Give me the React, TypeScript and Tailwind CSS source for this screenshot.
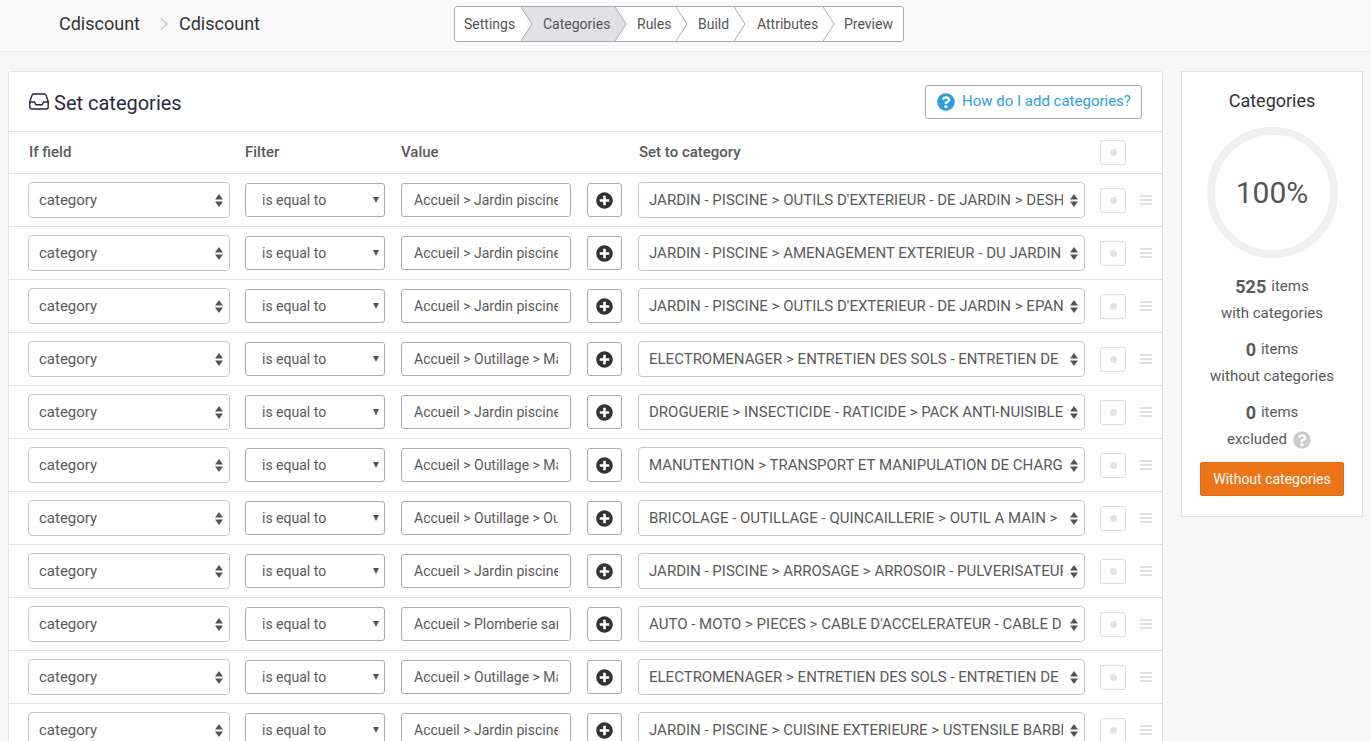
import { FaPlusCircle, FaQuestionCircle } from 'react-icons/fa';

interface Rule {
  value: string;
  category: string;
}

const steps = [
  { label: 'Settings', width: 'w-[66px]', pad: 'pl-[9px]' },
  { label: 'Categories', width: 'w-[94px]', pad: 'pl-[22px]', active: true },
  { label: 'Rules', width: 'w-[61px]', pad: 'pl-[22px]' },
  { label: 'Build', width: 'w-[58px]', pad: 'pl-[22px]' },
  { label: 'Attributes', width: 'w-[89px]', pad: 'pl-[23px]' },
  { label: 'Preview', width: 'w-[80px]', pad: 'pl-[21px]', last: true },
];

const rules: Rule[] = [
  { value: 'Accueil > Jardin piscine', category: "JARDIN - PISCINE > OUTILS D'EXTERIEUR - DE JARDIN > DESH" },
  { value: 'Accueil > Jardin piscine', category: 'JARDIN - PISCINE > AMENAGEMENT EXTERIEUR - DU JARDIN' },
  { value: 'Accueil > Jardin piscine', category: "JARDIN - PISCINE > OUTILS D'EXTERIEUR - DE JARDIN > EPAN" },
  { value: 'Accueil > Outillage > Ma', category: 'ELECTROMENAGER > ENTRETIEN DES SOLS - ENTRETIEN DE' },
  { value: 'Accueil > Jardin piscine', category: 'DROGUERIE > INSECTICIDE - RATICIDE > PACK ANTI-NUISIBLE' },
  { value: 'Accueil > Outillage > Ma', category: 'MANUTENTION > TRANSPORT ET MANIPULATION DE CHARG' },
  { value: 'Accueil > Outillage > Ou', category: 'BRICOLAGE - OUTILLAGE - QUINCAILLERIE > OUTIL A MAIN >' },
  { value: 'Accueil > Jardin piscine', category: 'JARDIN - PISCINE > ARROSAGE > ARROSOIR - PULVERISATEUR' },
  { value: 'Accueil > Plomberie san', category: "AUTO - MOTO > PIECES > CABLE D'ACCELERATEUR - CABLE D" },
  { value: 'Accueil > Outillage > Ma', category: 'ELECTROMENAGER > ENTRETIEN DES SOLS - ENTRETIEN DE' },
  { value: 'Accueil > Jardin piscine', category: 'JARDIN - PISCINE > CUISINE EXTERIEURE > USTENSILE BARBE' },
];

const UpDown = () => (
  <svg width="8" height="13" viewBox="0 0 8 13" className="shrink-0">
    <path d="M4 0 8 5.500H0zM4 13 0 7.500h8z" fill="#555" />
  </svg>
);

const DotButton = () => (
  <div className="w-[26px] h-[25px] shrink-0 flex items-center justify-center border border-[#dcdcdc] rounded-[3px] bg-white">
    <div className="w-[7px] h-[7px] rounded-full bg-[#e2e2e2]" />
  </div>
);

const InboxIcon = () => (
  <svg width="20" height="17" viewBox="0 0 20 17" fill="none" stroke="#24243f" strokeWidth="1.400" strokeLinejoin="round">
    <path d="M4.500 1h11a1.500 1.500 0 0 1 1.400 1L19.200 8.500V14a2 2 0 0 1-2 2H2.800a2 2 0 0 1-2-2V8.500L3.100 2a1.500 1.500 0 0 1 1.400-1z" />
    <path d="M1 9h4.500l1.500 2.800h6L14.500 9H19" />
  </svg>
);

const RuleRow = ({ rule }: { rule: Rule }) => (
  <div className="h-[53px] shrink-0 border-b border-[#e2e2e2] flex items-center pl-[19px] text-[14px] text-[#5a5a5a]">
    <div className="w-[202px] h-9 shrink-0 flex items-center justify-between border border-[#c9c9cd] rounded-[4px] pl-[10px] pr-[6px] text-[15px]">
      <span>category</span>
      <UpDown />
    </div>
    <div className="ml-[15px] w-[140px] h-[34px] shrink-0 flex items-center justify-between border border-[#a9a9b3] rounded-[3px] pl-4 pr-[5px]">
      <span>is equal to</span>
      <svg width="6" height="6" viewBox="0 0 6 6">
        <path d="M0 0h6L3 6z" fill="#555" />
      </svg>
    </div>
    <div className="ml-4 w-[170px] h-[34px] shrink-0 flex items-center border border-[#a9a9b3] rounded-[3px] pl-3 pr-3">
      <span className="block overflow-hidden whitespace-nowrap">{rule.value}</span>
    </div>
    <div className="ml-4 w-[35px] h-[34px] shrink-0 flex items-center justify-center border border-[#a9a9b3] rounded-[3px]">
      <FaPlusCircle className="w-[17px] h-[17px] text-[#333]" />
    </div>
    <div className="ml-4 w-[447px] h-9 shrink-0 flex items-center border border-[#c9c9cd] rounded-[4px] pl-[10px] pr-[6px] text-[15px]">
      <span className="block flex-1 overflow-hidden whitespace-nowrap">{rule.category}</span>
      <span className="ml-[7px]">
        <UpDown />
      </span>
    </div>
    <div className="ml-[15px]">
      <DotButton />
    </div>
    <div className="ml-[14px] w-3 flex flex-col gap-[2px]">
      <div className="h-[2px] bg-[#dedede]" />
      <div className="h-[2px] bg-[#dedede]" />
      <div className="h-[2px] bg-[#dedede]" />
    </div>
  </div>
);

const Stat = ({ count, label, help }: { count: string; label: string; help?: boolean }) => (
  <div className="text-center text-[#5a5a5a] text-[15px]">
    <div className="h-[27px] flex items-center justify-center gap-[5px]">
      <span className="font-bold text-[18px]">{count}</span>
      <span>items</span>
    </div>
    <div className={`h-[27px] flex items-center justify-center gap-[6px] ${help ? 'pr-[6px]' : ''}`}>
      <span>{label}</span>
      {help && <FaQuestionCircle className="w-[18px] h-[18px] text-[#ccc]" />}
    </div>
  </div>
);

export default function App() {
  return (
    <div className="h-screen overflow-hidden bg-[#f7f7f7] font-['Roboto',sans-serif]">
      <header className="h-[52px] bg-[#fafafa] border-b border-[#eeeeee] flex items-center relative">
        <div className="flex items-center pl-[59px] pb-1 text-[18px] text-[#333]">
          <span>Cdiscount</span>
          <svg width="10" height="14" viewBox="0 0 10 14" fill="none" stroke="#d0d0d0" strokeWidth="2" className="ml-[19px] mr-[10px]">
            <path d="M2 1.500 8 7l-6 5.500" />
          </svg>
          <span>Cdiscount</span>
        </div>
        <nav className="absolute left-[454px] top-[6px] h-9 flex bg-white border border-[#a9a9b3] rounded-[3px] text-[14px] text-[#555] overflow-hidden">
          {steps.map((s) => (
            <div key={s.label} className={`relative h-full flex items-center ${s.width} ${s.pad} ${s.active ? 'bg-[#e2e2e6]' : ''}`}>
              <span className="relative z-20">{s.label}</span>
              {!s.last && (
                <svg width="12" height="34" viewBox="0 0 12 34" className="absolute top-0 left-full z-10">
                  <path d="M0 0l11 17L0 34z" fill={s.active ? '#e2e2e6' : '#fff'} />
                  <path d="M0 0l11 17L0 34" fill="none" stroke="#a9a9b3" />
                </svg>
              )}
            </div>
          ))}
        </nav>
      </header>

      <main className="flex items-start gap-[18px] pt-[19px] pl-2 pr-2">
        <section className="w-[1155px] shrink-0 bg-white border border-[#e2e2e2] rounded-[3px]">
          <div className="h-[60px] border-b border-[#e2e2e2] flex items-center justify-between pl-5 pr-5">
            <div className="flex items-center gap-[5px] text-[20px] text-[#2a2a45] pt-[2px]">
              <span className="pb-[2px]">
                <InboxIcon />
              </span>
              <span>Set categories</span>
            </div>
            <div className="w-[217px] h-[34px] flex items-center justify-start pl-[11px] gap-[7px] border border-[#a9a9b3] rounded-[3px] text-[15px] text-[#2e9fdc]">
              <FaQuestionCircle className="w-[18px] h-[18px]" />
              <span>How do I add categories?</span>
            </div>
          </div>
          <div className="h-[42px] border-b border-[#e2e2e2] flex items-center pl-5 text-[15px] font-medium text-[#5a5a5a]">
            <div className="w-[216px]">If field</div>
            <div className="w-[156px]">Filter</div>
            <div className="w-[238px]">Value</div>
            <div className="w-[461px]">Set to category</div>
            <DotButton />
          </div>
          {rules.map((rule, i) => (
            <RuleRow key={i} rule={rule} />
          ))}
        </section>

        <aside className="w-[182px] h-[446px] shrink-0 bg-white border border-[#e2e2e2] flex flex-col items-center pt-[17px]">
          <h2 className="text-[18px] leading-[24px] text-[#333]">Categories</h2>
          <div className="mt-[14px] w-[131px] h-[131px] rounded-full border-[8px] border-[#f0f0f0] flex items-center justify-center text-[30px] text-[#555]">
            100%
          </div>
          <div className="mt-[15px] flex flex-col gap-[9px]">
            <Stat count="525" label="with categories" />
            <Stat count="0" label="without categories" />
            <Stat count="0" label="excluded" help />
          </div>
          <div className="mt-[9px] w-[144px] h-[34px] flex items-center justify-center bg-[#ec7518] border border-[#dd6a10] rounded-[2px] text-[14px] text-white">
            Without categories
          </div>
        </aside>
      </main>
    </div>
  );
}
